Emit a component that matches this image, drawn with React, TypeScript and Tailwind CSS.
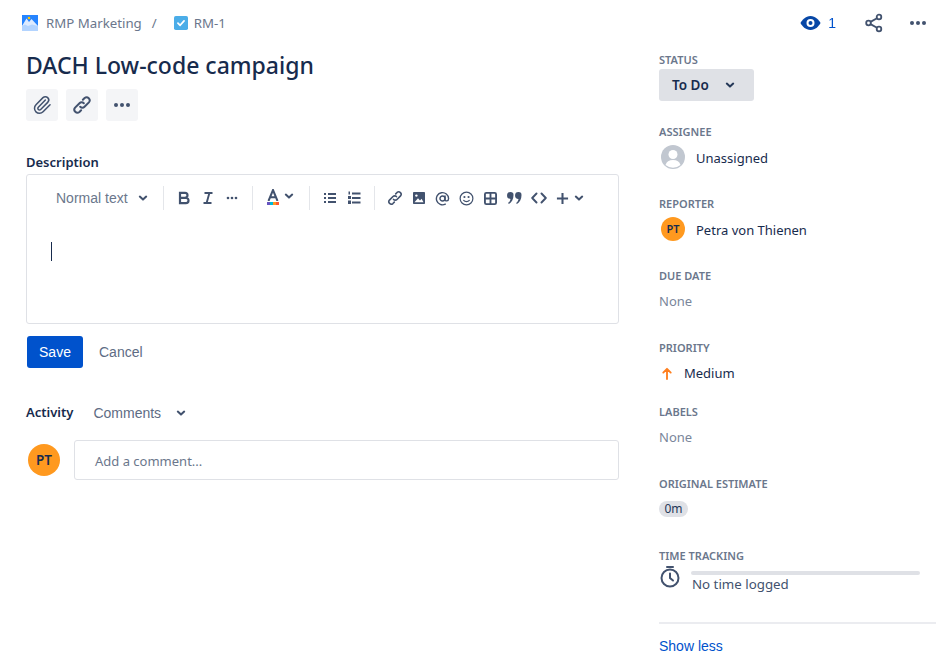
import type { ReactNode } from 'react'
import { Paperclip } from 'lucide-react'

const Chevron = ({ className = '' }: { className?: string }) => (
  <svg viewBox="0 0 12 12" className={`h-3 w-3 ${className}`} fill="none" stroke="currentColor" strokeWidth="2" strokeLinecap="round" strokeLinejoin="round">
    <path d="M2.800 4.600 6 7.600l3.200-3" />
  </svg>
)

const Dots = ({ className = '' }: { className?: string }) => (
  <svg viewBox="0 0 18 6" className={className} fill="currentColor">
    <circle cx="3" cy="3" r="2" />
    <circle cx="9" cy="3" r="2" />
    <circle cx="15" cy="3" r="2" />
  </svg>
)

const LinkIcon = ({ className = '' }: { className?: string }) => (
  <svg viewBox="0 0 20 20" className={className} fill="none" stroke="currentColor" strokeWidth="2" strokeLinecap="round">
    <path d="M8.200 11.800a3 3 0 0 0 4.300 0l4.400-4.400a3.050 3.050 0 0 0-4.300-4.300l-1.700 1.700" />
    <path d="M11.800 8.200a3 3 0 0 0-4.300 0l-4.400 4.400a3.050 3.050 0 0 0 4.300 4.300l1.700-1.700" />
  </svg>
)

const Sep = ({ className }: { className: string }) => <div className={`h-6 w-px bg-[#e4e6ea] ${className}`} />

const Slot = ({ children }: { children: ReactNode }) => (
  <div className="flex h-6 w-6 shrink-0 items-center justify-center">{children}</div>
)

const Field = ({ label, className, children }: { label: string; className: string; children: ReactNode }) => (
  <div className={className}>
    <div className="h-4 text-[11px] leading-4 font-semibold text-[#6b778c] whitespace-nowrap">{label}</div>
    {children}
  </div>
)

const App = () => {
  return (
    <div className="flex h-[661px] w-[951px] overflow-hidden bg-white text-[13px] text-[#172b4d] font-['Noto_Sans','Open_Sans',sans-serif]">
      <div className="w-[659px] shrink-0 pl-[26px] pr-10">
        <div className="ml-[-4px] mt-[14px] flex h-[18px] items-center text-[13.25px] text-[#6b778c]">
          <svg viewBox="0 0 16 16" className="h-4 w-4 shrink-0">
            <rect width="16" height="16" fill="#2684ff" />
            <path d="M0 11 4.500 3.500 7 7l2.500-3L16 11v5H0z" fill="#deebff" />
            <path d="M0 11l3-1.500 3 1.500 4-1.500 6 1.500v5H0z" fill="#b3d4ff" />
            <circle cx="7" cy="3" r="1.300" fill="#ffc400" />
          </svg>
          <span className="ml-2 pt-[2px]">RMP Marketing</span>
          <span className="ml-[10px] pt-[2px]">/</span>
          <svg viewBox="0 0 16 16" className="ml-[17px] h-[14px] w-[14px] shrink-0">
            <rect width="16" height="16" rx="2" fill="#4bade8" />
            <path d="M4.500 8.200 7 10.600l4.500-5" fill="none" stroke="#fff" strokeWidth="2" strokeLinecap="round" strokeLinejoin="round" />
          </svg>
          <span className="ml-[6px] pt-[2px]">RM-1</span>
        </div>

        <h1 className="mt-[15px] h-9 text-[23px] leading-9 font-medium">DACH Low-code campaign</h1>

        <div className="mt-[6px] flex gap-2 text-[#42526e]">
          <div className="flex h-8 w-8 items-center justify-center rounded-[3px] bg-[#f4f5f7]">
            <Paperclip className="h-[20px] w-[20px]" strokeWidth={1.800} />
          </div>
          <div className="flex h-8 w-8 items-center justify-center rounded-[3px] bg-[#f4f5f7]">
            <LinkIcon className="h-[20px] w-[20px]" />
          </div>
          <div className="flex h-8 w-8 items-center justify-center rounded-[3px] bg-[#f4f5f7]">
            <Dots className="h-[6px] w-[18px]" />
          </div>
        </div>

        <div className="mt-[32px] h-[18px] leading-[18px] font-semibold">Description</div>

        <div className="mt-[3px] h-[150px] rounded-[3px] border border-[#dfe1e6] text-[#42526e]">
          <div className="flex h-[46px] items-center">
            <span className="ml-[29px] font-['Liberation_Sans',sans-serif] text-[14px] text-[#6b778c]">Normal text</span>
            <Chevron className="ml-[9px]" />
            <Sep className="ml-[14px]" />
            <div className="ml-[8px] flex">
              <Slot>
                <svg viewBox="0 0 12 14" className="h-[14px] w-[12px]" fill="none" stroke="currentColor" strokeWidth="2.200">
                  <path d="M2 1.800h5a2.500 2.500 0 0 1 0 5H2zM2 6.800h5.800a2.700 2.700 0 0 1 0 5.400H2z" />
                </svg>
              </Slot>
              <Slot>
                <svg viewBox="0 0 14 14" className="h-[14px] w-[14px]" fill="none" stroke="currentColor" strokeWidth="1.900">
                  <path d="M3.500 2h8M2.500 12h8M8.400 2 5.600 12" />
                </svg>
              </Slot>
              <Slot>
                <Dots className="h-[4px] w-[12px]" />
              </Slot>
            </div>
            <Sep className="ml-[8px]" />
            <div className="ml-[14px] flex h-[18px] w-3 flex-col items-center">
              <svg viewBox="0 0 12 12" className="h-3 w-3" fill="none" stroke="currentColor" strokeWidth="2">
                <path d="M1.500 12 6 1l4.500 11M3.300 8.300h5.400" />
              </svg>
              <div className="mt-[1px] flex h-[3px] w-3">
                <div className="flex-1 bg-[#6554c0]" />
                <div className="flex-1 bg-[#00b8d9]" />
                <div className="flex-1 bg-[#ff991f]" />
                <div className="flex-1 bg-[#ff5630]" />
              </div>
            </div>
            <Chevron className="ml-[4px] mb-[4px]" />
            <Sep className="ml-[14px]" />
            <div className="ml-[8px] flex">
              <Slot>
                <svg viewBox="0 0 14 14" className="h-[14px] w-[14px]" fill="currentColor">
                  <rect x="1" y="2" width="2" height="2" /><rect x="5" y="2" width="8" height="2" />
                  <rect x="1" y="6" width="2" height="2" /><rect x="5" y="6" width="8" height="2" />
                  <rect x="1" y="10" width="2" height="2" /><rect x="5" y="10" width="8" height="2" />
                </svg>
              </Slot>
              <Slot>
                <svg viewBox="0 0 14 14" className="h-[14px] w-[14px]" fill="currentColor">
                  <rect x="1.500" y="0.500" width="1.500" height="3" /><rect x="5" y="1.500" width="8.500" height="2" />
                  <rect x="1" y="5" width="3" height="3" /><rect x="5" y="6" width="8.500" height="2" />
                  <rect x="1" y="9.500" width="3" height="3.500" /><rect x="5" y="10.500" width="8.500" height="2" />
                </svg>
              </Slot>
            </div>
            <Sep className="ml-[8px]" />
            <div className="ml-[8px] flex">
              <Slot>
                <LinkIcon className="h-[16px] w-[16px]" />
              </Slot>
              <Slot>
                <svg viewBox="0 0 12 12" className="h-[12px] w-[12px]">
                  <rect width="12" height="12" rx="0.800" fill="currentColor" />
                  <circle cx="3.400" cy="3.600" r="1.200" fill="#fff" />
                  <path d="M1.500 10.200 5 6.200l2 2.200 1.600-1.600 1.900 3.400z" fill="#fff" />
                </svg>
              </Slot>
              <Slot>
                <svg viewBox="0 0 16 16" className="h-[15px] w-[15px]" fill="none" stroke="currentColor" strokeWidth="1.500" strokeLinecap="round">
                  <circle cx="8" cy="8" r="2.700" />
                  <path d="M10.700 5.400v3.800c0 2 3.800 2 3.800-1.200A6.500 6.500 0 1 0 11 14" />
                </svg>
              </Slot>
              <Slot>
                <svg viewBox="0 0 16 16" className="h-[15px] w-[15px]" fill="none" stroke="currentColor" strokeWidth="1.300" strokeLinecap="round">
                  <circle cx="8" cy="8" r="6.800" />
                  <circle cx="5.800" cy="6.400" r="0.500" fill="currentColor" />
                  <circle cx="10.200" cy="6.400" r="0.500" fill="currentColor" />
                  <path d="M5 10c1.500 1.700 4.500 1.700 6 0" />
                </svg>
              </Slot>
              <Slot>
                <svg viewBox="0 0 14 14" className="h-[13px] w-[13px]" fill="none" stroke="currentColor" strokeWidth="2">
                  <rect x="1" y="1" width="12" height="12" rx="1.500" />
                  <path d="M7 1v12M1 7h12" />
                </svg>
              </Slot>
              <Slot>
                <svg viewBox="0 0 16 14" className="h-[14px] w-[16px]" fill="currentColor">
                  <path d="M3.500 1a3 3 0 0 1 3 3.200c0 4-1.800 7.300-4.600 8.800l-.8-1c1.400-1.200 2.200-2.600 2.400-4.100A3.100 3.100 0 0 1 3.500 1z" />
                  <path d="M11.500 1a3 3 0 0 1 3 3.200c0 4-1.800 7.300-4.600 8.800l-.8-1c1.400-1.200 2.200-2.600 2.400-4.100A3.100 3.100 0 0 1 11.500 1z" />
                </svg>
              </Slot>
              <Slot>
                <svg viewBox="0 0 16 12" className="h-[12px] w-[16px]" fill="none" stroke="currentColor" strokeWidth="1.900" strokeLinecap="round" strokeLinejoin="round">
                  <path d="M5.500 1.500 1.200 6l4.300 4.500M10.500 1.500 14.800 6l-4.300 4.500" />
                </svg>
              </Slot>
              <Slot>
                <svg viewBox="0 0 14 14" className="h-[13px] w-[13px]" fill="none" stroke="currentColor" strokeWidth="2.200">
                  <path d="M7 1v12M1 7h12" />
                </svg>
              </Slot>
              <Chevron className="ml-[-2px] mt-[6px]" />
            </div>
          </div>
          <div className="ml-[24px] mt-[21px] h-[19px] w-px bg-[#172b4d]" />
        </div>

        <div className="mt-[12px] flex items-center font-['Liberation_Sans',sans-serif] text-[14px]">
          <div className="ml-px flex h-8 w-14 items-center justify-center rounded-[3px] bg-[#0052cc] text-white">Save</div>
          <span className="ml-4 text-[#5e6c84]">Cancel</span>
        </div>

        <div className="mt-[36px] flex h-[18px] items-center">
          <span className="font-semibold">Activity</span>
          <span className="ml-5 font-['Liberation_Sans',sans-serif] text-[14px] text-[#5e6c84]">Comments</span>
          <Chevron className="ml-[14px] text-[#42526e]" />
        </div>

        <div className="mt-[18px] flex items-center">
          <div className="ml-[2px] flex h-8 w-8 items-center justify-center rounded-full bg-[#ff991f] text-[13.500px] font-semibold">PT</div>
          <div className="ml-[14px] flex h-10 flex-1 items-center rounded-[3px] border border-[#dfe1e6] pl-5 pt-[3px] text-[#6b778c]">Add a comment...</div>
        </div>
      </div>

      <div className="w-[277px] shrink-0 pt-[52px]">
        <Field label="STATUS" className="h-[72px]">
          <div className="mt-[1px] flex h-8 w-[95px] items-center rounded-[3px] bg-[#dfe1e6] pl-[13px] text-[13.500px] font-semibold">
            To Do
            <Chevron className="ml-[15px] text-[#253858]" />
          </div>
        </Field>

        <Field label="ASSIGNEE" className="h-[72px]">
          <div className="mt-[5px] flex h-6 items-center">
            <svg viewBox="0 0 24 24" className="ml-[2px] h-6 w-6">
              <circle cx="12" cy="12" r="12" fill="#c1c7d0" />
              <circle cx="12" cy="9.500" r="4.500" fill="#fff" />
              <path d="M4.500 20c1-3.500 3.500-5 7.500-5s6.500 1.500 7.500 5a12 12 0 0 1-15 0z" fill="#fff" />
            </svg>
            <span className="ml-[11px] pt-[4px]">Unassigned</span>
          </div>
        </Field>

        <Field label="REPORTER" className="h-[72px]">
          <div className="mt-[5px] flex h-6 items-center">
            <div className="ml-[2px] flex h-6 w-6 items-center justify-center rounded-full bg-[#ff991f] text-[11px] font-semibold">PT</div>
            <span className="ml-[11px] pt-[4px]">Petra von Thienen</span>
          </div>
        </Field>

        <Field label="DUE DATE" className="h-[72px]">
          <div className="mt-[5px] h-6 leading-6 text-[#7a869a]">None</div>
        </Field>

        <Field label="PRIORITY" className="h-[64px]">
          <div className="mt-[5px] flex h-6 items-center">
            <svg viewBox="0 0 12 14" className="ml-[2px] h-[13px] w-[12px]" fill="none" stroke="#ff7f1e" strokeWidth="2" strokeLinecap="round" strokeLinejoin="round">
              <path d="M6 13V2M2 6l4-4 4 4" />
            </svg>
            <span className="ml-[11px] pt-[2px]">Medium</span>
          </div>
        </Field>

        <Field label="LABELS" className="h-[72px]">
          <div className="mt-[5px] h-6 leading-6 text-[#7a869a]">None</div>
        </Field>

        <Field label="ORIGINAL ESTIMATE" className="h-[72px]">
          <div className="mt-[9px] flex h-[16px] w-[29px] items-center justify-center rounded-full bg-[#dfe1e6] text-[12px] text-[#253858]">0m</div>
        </Field>

        <Field label="TIME TRACKING" className="h-[74px]">
          <div className="flex">
            <svg viewBox="0 0 20 24" className="ml-[1px] mt-[1px] h-6 w-5 text-[#42526e]" fill="none" stroke="currentColor" strokeWidth="2" strokeLinecap="round">
              <path d="M7 2h6" />
              <circle cx="10" cy="13" r="8.500" />
              <path d="M10 8.500V13l3 2.500" />
            </svg>
            <div className="ml-[11px] w-[229px]">
              <div className="mt-[7px] h-[4px] rounded-full bg-[#dfe1e6]" />
              <div className="h-[18px] pl-px text-[13.300px] leading-[18px] text-[#42526e]">No time logged</div>
            </div>
          </div>
        </Field>

        <div className="h-[2px] bg-[#ebecf0]" />
        <div className="mt-[14px] font-['Liberation_Sans',sans-serif] text-[14px] leading-4 text-[#0052cc]">Show less</div>
      </div>

      <div className="fixed right-[24px] top-[14px] flex h-[18px] items-center text-[#42526e]">
        <svg viewBox="0 0 20 14" className="h-[14px] w-[21px]">
          <path d="M10 0c5 0 8.500 4 10 7-1.500 3-5 7-10 7S1.500 10 0 7c1.500-3 5-7 10-7z" fill="#0747a6" />
          <circle cx="10" cy="7" r="4" fill="#fff" />
          <circle cx="10" cy="7" r="2" fill="#0747a6" />
        </svg>
        <span className="ml-[7px] font-['Liberation_Sans',sans-serif] text-[14px] text-[#0052cc]">1</span>
        <svg viewBox="0 0 20 20" className="ml-[28px] h-5 w-5" fill="none" stroke="currentColor" strokeWidth="1.800">
          <circle cx="4.500" cy="10" r="2.300" />
          <circle cx="15" cy="4" r="2.300" />
          <circle cx="15" cy="16" r="2.300" />
          <path d="M6.500 8.900 13 5.200M6.500 11.100l6.500 3.700" />
        </svg>
        <Dots className="ml-[25px] h-[6px] w-[18px]" />
      </div>
    </div>
  )
}

export default App
